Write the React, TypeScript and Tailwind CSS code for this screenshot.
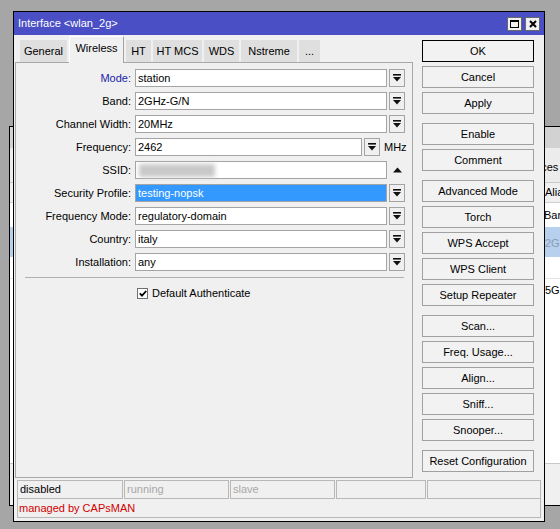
import React from 'react';

const DropIcon = () => (
  <svg width="8" height="8" viewBox="0 0 8 8">
    <rect x="0" y="0" width="8" height="1.6" fill="#111" />
    <polygon points="0,3 8,3 4,7.5" fill="#111" />
  </svg>
);

const DropBtn = () => (
  <div className="w-[16px] h-[18px] shrink-0 ml-[2px] border border-[#a4a4a4] bg-[#f0f0f0] flex items-center justify-center">
    <DropIcon />
  </div>
);

interface RowProps {
  label: string;
  value?: string;
  blue?: boolean;
  selected?: boolean;
  kind?: 'drop' | 'freq' | 'ssid';
}

const Row: React.FC<RowProps> = ({ label, value, blue, selected, kind = 'drop' }) => (
  <div className="flex items-center h-[18px]">
    <div className={`w-[119px] pr-[4px] text-right whitespace-nowrap ${blue ? 'text-[#1c1ca8]' : ''}`}>{label}:</div>
    <div
      className={`h-[18px] border border-[#a4a4a4] bg-white flex items-center ${kind === 'freq' ? 'w-[227px]' : 'w-[252px]'}`}
    >
      {kind === 'ssid' ? (
        <div className="ml-[3px] w-[76px] h-[13px] bg-[#c9c9c9] blur-[2px]" />
      ) : (
        <div className={`h-full w-full flex items-center pl-[2px] ${selected ? 'bg-[#3399ff] text-white' : ''}`}>{value}</div>
      )}
    </div>
    {kind === 'ssid' ? (
      <svg className="ml-[6px]" width="9" height="6" viewBox="0 0 9 6">
        <polygon points="0,5.5 9,5.5 4.5,0.5" fill="#111" />
      </svg>
    ) : (
      <DropBtn />
    )}
    {kind === 'freq' && <span className="ml-[4px]">MHz</span>}
  </div>
);

const tabs = [
  { name: 'General', w: 'w-[47px]' },
  { name: 'Wireless', w: 'w-[55px]', active: true },
  { name: 'HT', w: 'w-[25px]' },
  { name: 'HT MCS', w: 'w-[49px]' },
  { name: 'WDS', w: 'w-[35px]' },
  { name: 'Nstreme', w: 'w-[56px]' },
  { name: '...', w: 'w-[21px]' },
];

const buttonGroups = [
  ['OK', 'Cancel', 'Apply'],
  ['Enable', 'Comment'],
  ['Advanced Mode', 'Torch', 'WPS Accept', 'WPS Client', 'Setup Repeater'],
  ['Scan...', 'Freq. Usage...', 'Align...', 'Sniff...', 'Snooper...'],
  ['Reset Configuration'],
];

export default function App() {
  return (
    <div className="relative w-[560px] h-[529px] overflow-hidden bg-[#a6a6a6] text-[11px] leading-none text-black font-['Liberation_Sans',Arial,sans-serif]">
      {/* window behind the dialog */}
      <div className="absolute left-[9px] top-[126px] w-[600px] h-[380px] border border-black bg-white flex flex-col">
        <div className="h-[21px] bg-[#d2d2d2]" />
        <div className="h-[35px] bg-[#ececec] border-b border-[#c8c8c8] flex items-center pt-[4px] pl-[500px]">Interfaces</div>
        <div className="h-[20px] bg-[#f0f0f0] border-b border-[#d0d0d0] flex items-center pl-[535px]">Alias</div>
        <div className="h-[24px] flex items-center pl-[534px]">Band</div>
        <div className="h-[30px] bg-[#b7d0ee] flex items-end pb-[8px] pl-[535px] text-[#8a9ab5]">2GHz-B/G/N</div>
        <div className="h-[22px] border-b border-[#e4e4e4]" />
        <div className="h-[22px] flex items-center pl-[535px]">5GHz-A/N</div>
        <div className="flex-1" />
        <div className="h-[42px] bg-[#f0f0f0] border-t border-[#c8c8c8]" />
      </div>

      {/* dialog */}
      <div className="absolute left-[13px] top-[11px] w-[532px] h-[511px] border border-black bg-[#f0f0f0] flex flex-col">
        <div className="h-[23px] shrink-0 bg-[#4a4fc6] flex items-center pl-[4px] pr-[4px] text-white">
          <span className="flex-1">Interface &lt;wlan_2g&gt;</span>
          <div className="w-[15px] h-[14px] bg-[#f0f0f0] border border-[#6a6a6a] flex items-center justify-center">
            <div className="w-[9px] h-[8px] border border-black border-t-2" />
          </div>
          <div className="ml-[3px] w-[15px] h-[14px] bg-[#f0f0f0] border border-[#6a6a6a] flex items-center justify-center">
            <svg width="8" height="8" viewBox="0 0 8 8">
              <path d="M1 1 L7 7 M7 1 L1 7" stroke="#000" strokeWidth="2" />
            </svg>
          </div>
        </div>

        <div className="flex h-[443px] shrink-0">
          {/* left: tabs + panel */}
          <div className="pl-[1px] flex flex-col">
            <div className="h-[27px] flex items-end gap-[2px] pl-[5px]">
              {tabs.map((t) =>
                t.active ? (
                  <div
                    key={t.name}
                    className={`${t.w} h-[27px] -mb-px relative z-10 bg-[#f0f0f0] border border-b-0 border-t-white border-l-white border-r-[#a4a4a4] flex items-center justify-center pb-[3px]`}
                  >
                    {t.name}
                  </div>
                ) : (
                  <div key={t.name} className={`${t.w} h-[22px] bg-[#dfdfdf] flex items-center justify-center pt-px`}>
                    {t.name}
                  </div>
                )
              )}
            </div>
            <div className="w-[398px] h-[416px] border border-[#a8a8a8] flex flex-col">
              <div className="pt-[6px] flex flex-col gap-[5px]">
                <Row label="Mode" value="station" blue />
                <Row label="Band" value="2GHz-G/N" />
                <Row label="Channel Width" value="20MHz" />
                <Row label="Frequency" value="2462" kind="freq" />
                <Row label="SSID" kind="ssid" />
                <Row label="Security Profile" value="testing-nopsk" selected />
                <Row label="Frequency Mode" value="regulatory-domain" />
                <Row label="Country" value="italy" />
                <Row label="Installation" value="any" />
              </div>
              <div className="mt-[6px] ml-[9px] w-[379px] h-px bg-[#b0b0b0]" />
              <div className="mt-[10px] ml-[121px] flex items-center">
                <div className="w-[11px] h-[11px] border border-[#707070] bg-white flex items-center justify-center">
                  <svg width="8" height="7" viewBox="0 0 8 7">
                    <path d="M0.8 3.4 L3 5.6 L7.2 1" stroke="#000" strokeWidth="1.8" fill="none" />
                  </svg>
                </div>
                <span className="ml-[4px]">Default Authenticate</span>
              </div>
            </div>
          </div>

          {/* right: buttons */}
          <div className="ml-[9px] pt-[5px] flex flex-col gap-[9px]">
            {buttonGroups.map((g, gi) => (
              <div key={gi} className="flex flex-col gap-[4px]">
                {g.map((b) => (
                  <div
                    key={b}
                    className={`w-[112px] h-[22px] flex items-center justify-center pt-px bg-[#f2f2f2] border ${
                      b === 'OK' ? 'border-black' : 'border-[#a0a0a0]'
                    }`}
                  >
                    {b}
                  </div>
                ))}
              </div>
            ))}
          </div>
        </div>

        {/* status bar */}
        <div className="mt-[2px] ml-[3px] flex flex-col">
          <div className="flex gap-[1px] h-[19px]">
            <div className="w-[106px] border border-[#b8b8b8] flex items-center pl-[2px]">disabled</div>
            <div className="w-[105px] border border-[#b8b8b8] flex items-center pl-[2px] text-[#a8a8a8]">running</div>
            <div className="w-[105px] border border-[#b8b8b8] flex items-center pl-[2px] text-[#a8a8a8]">slave</div>
            <div className="w-[90px] border border-[#b8b8b8]" />
            <div className="w-[114px] border border-[#b8b8b8]" />
          </div>
          <div className="w-[524px] h-[19px] border border-t-0 border-[#b8b8b8] flex items-center pl-[1px] text-[#d00000]">
            managed by CAPsMAN
          </div>
        </div>
      </div>
    </div>
  );
}
